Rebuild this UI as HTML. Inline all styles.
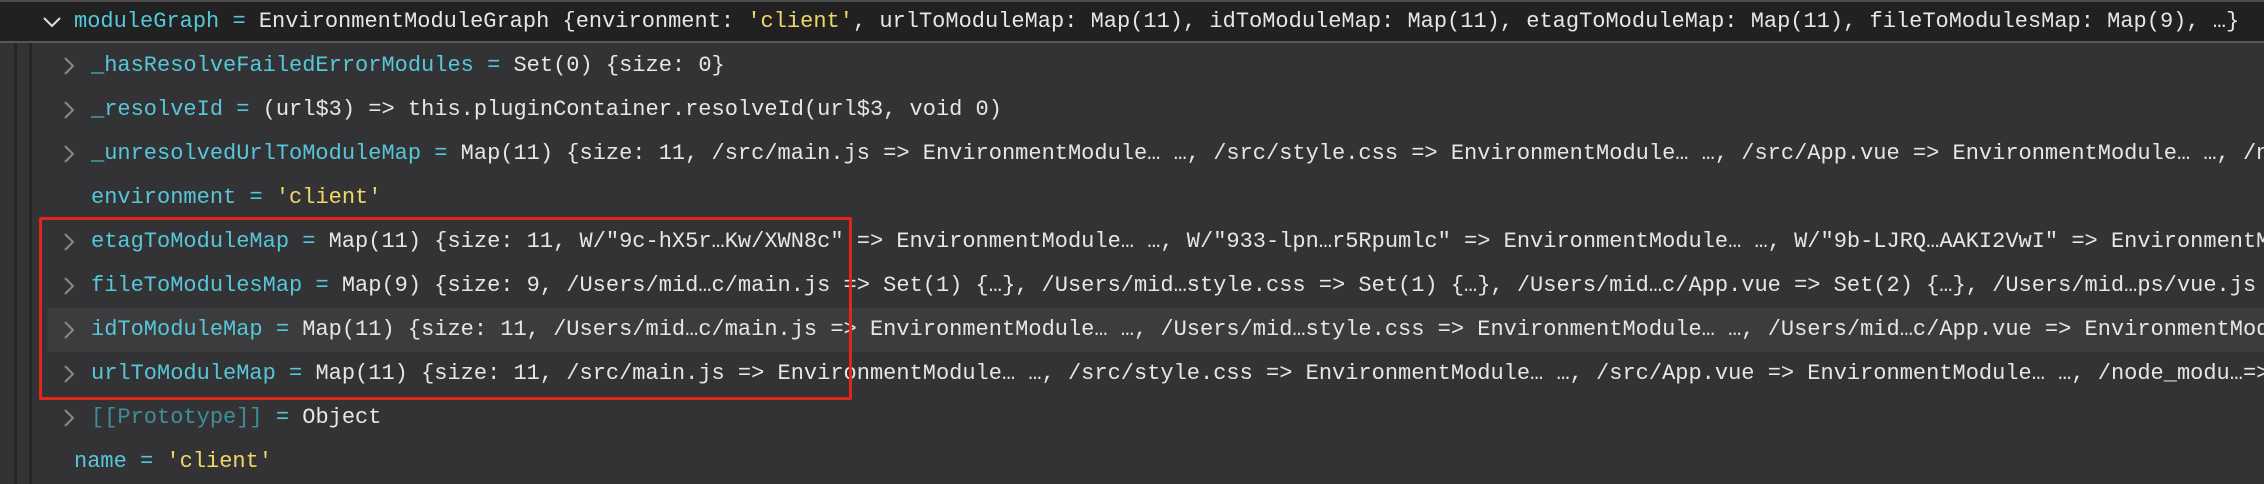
<!DOCTYPE html>
<html><head><meta charset="utf-8"><style>
html,body{margin:0;padding:0;width:2264px;height:484px;overflow:hidden;background:#333336;}
body{position:relative;font-family:"Liberation Mono",monospace;font-size:22px;}
.row{position:absolute;left:0;width:2264px;height:44px;line-height:44px;white-space:pre;overflow:hidden;color:#e6e6e6;}
.k{color:#56c7d9}.s{color:#f0d766}.p{color:#3f8f9b}
.g{position:absolute;top:0;bottom:0;width:3px;background:#262628;}
.chev{position:absolute;}
</style></head><body>
<div class="g" style="left:14px"></div>
<div class="g" style="left:29px"></div>
<div style="position:absolute;left:0;top:0;width:2264px;height:2px;background:#4d4d50"></div>
<div style="position:absolute;left:0;top:2px;width:2264px;height:39px;background:#212122"></div>
<div style="position:absolute;left:0;top:41px;width:2264px;height:2px;background:#58585b"></div>
<div style="position:absolute;left:47px;top:308px;width:2217px;height:44px;background:#3c3c3f"></div>

<svg class="chev" style="left:42px;top:14px" width="22" height="16"><path d="M2 4 L10 12 L18 4" fill="none" stroke="#e0e0e0" stroke-width="2"/></svg>
<div class="row" style="top:0;left:74px;height:43px;line-height:43px"><span class="k">moduleGraph</span> <span class="k">=</span> EnvironmentModuleGraph {environment: <span class="s">'client'</span>, urlToModuleMap: Map(11), idToModuleMap: Map(11), etagToModuleMap: Map(11), fileToModulesMap: Map(9), …}</div>

<svg class="chev" style="left:62px;top:56px" width="14" height="20"><path d="M3 2 L11 10 L3 18" fill="none" stroke="#8a8a8c" stroke-width="2"/></svg>
<div class="row" style="top:44px;left:91px"><span class="k">_hasResolveFailedErrorModules</span> <span class="k">=</span> Set(0) {size: 0}</div>
<svg class="chev" style="left:62px;top:100px" width="14" height="20"><path d="M3 2 L11 10 L3 18" fill="none" stroke="#8a8a8c" stroke-width="2"/></svg>
<div class="row" style="top:88px;left:91px"><span class="k">_resolveId</span> <span class="k">=</span> (url$3) =&gt; this.pluginContainer.resolveId(url$3, void 0)</div>
<svg class="chev" style="left:62px;top:144px" width="14" height="20"><path d="M3 2 L11 10 L3 18" fill="none" stroke="#8a8a8c" stroke-width="2"/></svg>
<div class="row" style="top:132px;left:91px"><span class="k">_unresolvedUrlToModuleMap</span> <span class="k">=</span> Map(11) {size: 11, /src/main.js =&gt; EnvironmentModule… …, /src/style.css =&gt; EnvironmentModule… …, /src/App.vue =&gt; EnvironmentModule… …, /node_modules</div>
<div class="row" style="top:176px;left:91px"><span class="k">environment</span> <span class="k">=</span> <span class="s">'client'</span></div>
<svg class="chev" style="left:62px;top:232px" width="14" height="20"><path d="M3 2 L11 10 L3 18" fill="none" stroke="#8a8a8c" stroke-width="2"/></svg>
<div class="row" style="top:220px;left:91px"><span class="k">etagToModuleMap</span> <span class="k">=</span> Map(11) {size: 11, W/"9c-hX5r…Kw/XWN8c" =&gt; EnvironmentModule… …, W/"933-lpn…r5Rpumlc" =&gt; EnvironmentModule… …, W/"9b-LJRQ…AAKI2VwI" =&gt; EnvironmentModule… …</div>
<svg class="chev" style="left:62px;top:276px" width="14" height="20"><path d="M3 2 L11 10 L3 18" fill="none" stroke="#8a8a8c" stroke-width="2"/></svg>
<div class="row" style="top:264px;left:91px"><span class="k">fileToModulesMap</span> <span class="k">=</span> Map(9) {size: 9, /Users/mid…c/main.js =&gt; Set(1) {…}, /Users/mid…style.css =&gt; Set(1) {…}, /Users/mid…c/App.vue =&gt; Set(2) {…}, /Users/mid…ps/vue.js =&gt; Set(1) {…}</div>
<svg class="chev" style="left:62px;top:320px" width="14" height="20"><path d="M3 2 L11 10 L3 18" fill="none" stroke="#8a8a8c" stroke-width="2"/></svg>
<div class="row" style="top:308px;left:91px"><span class="k">idToModuleMap</span> <span class="k">=</span> Map(11) {size: 11, /Users/mid…c/main.js =&gt; EnvironmentModule… …, /Users/mid…style.css =&gt; EnvironmentModule… …, /Users/mid…c/App.vue =&gt; EnvironmentModule… …</div>
<svg class="chev" style="left:62px;top:364px" width="14" height="20"><path d="M3 2 L11 10 L3 18" fill="none" stroke="#8a8a8c" stroke-width="2"/></svg>
<div class="row" style="top:352px;left:91px"><span class="k">urlToModuleMap</span> <span class="k">=</span> Map(11) {size: 11, /src/main.js =&gt; EnvironmentModule… …, /src/style.css =&gt; EnvironmentModule… …, /src/App.vue =&gt; EnvironmentModule… …, /node_modu…=&gt; Environ</div>
<svg class="chev" style="left:62px;top:408px" width="14" height="20"><path d="M3 2 L11 10 L3 18" fill="none" stroke="#8a8a8c" stroke-width="2"/></svg>
<div class="row" style="top:396px;left:91px"><span class="p">[[Prototype]]</span> <span class="k">=</span> Object</div>
<div class="row" style="top:440px;left:74px"><span class="k">name</span> <span class="k">=</span> <span class="s">'client'</span></div>

<div style="position:absolute;left:39px;top:217px;width:807px;height:177px;border:3px solid #e3261b;border-radius:2px"></div>
</body></html>
